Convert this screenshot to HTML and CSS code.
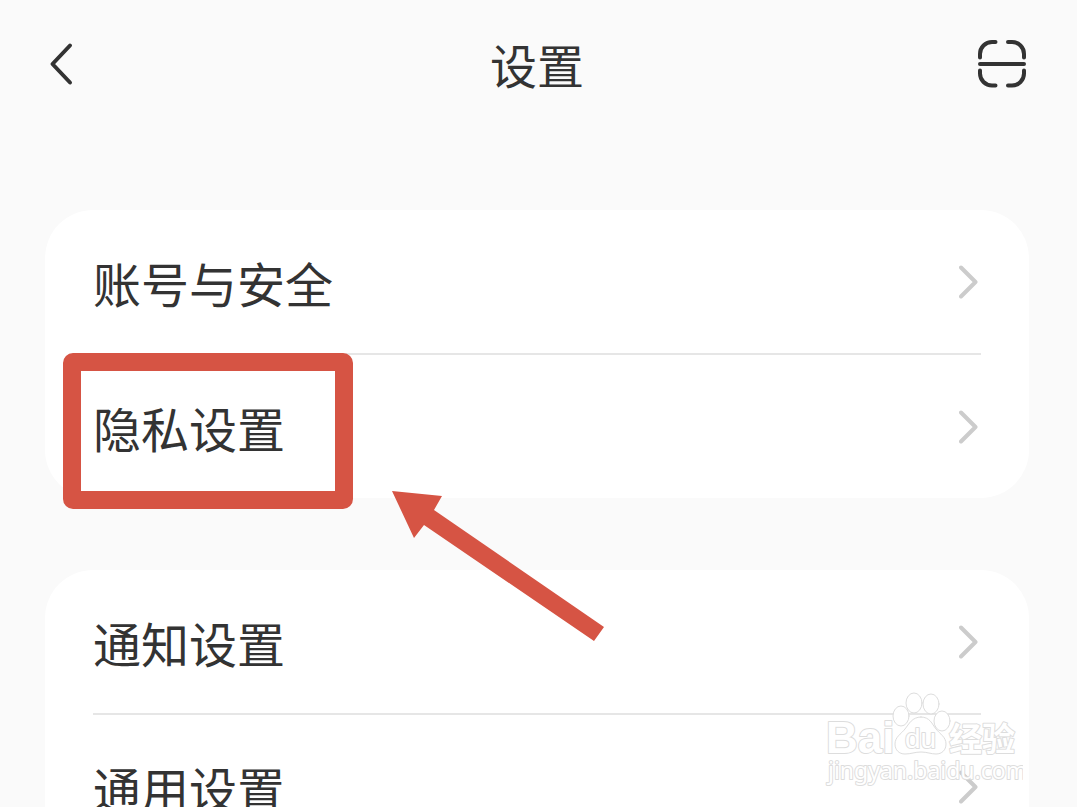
FILE: index.html
```
<!DOCTYPE html>
<html lang="zh-CN">
<head>
    <meta charset="UTF-8">
    <meta name="viewport" content="width=device-width, initial-scale=1.0">
    <title>设置</title>
    <link rel="stylesheet" href="styles.css">
</head>
<body>
    <header class="topbar">
        <button class="icon-button" type="button" aria-label="返回">
            <svg width="48" height="56" viewBox="0 0 48 56">
                <path d="M22 9.500 4.500 28 22 46.500"/>
            </svg>
        </button>
        <h1>设置</h1>
        <button class="icon-button" type="button" aria-label="扫一扫">
            <svg class="scan" width="48" height="56" viewBox="0 0 48 56">
                <path d="M2 21.500v-3.500a12 12 0 0 1 12-12h3.500M30 6h4a12 12 0 0 1 12 12v3.500M46 34.500v3a12 12 0 0 1-12 12h-4M17.500 49.500H14a12 12 0 0 1-12-12v-3M2 28h44"/>
            </svg>
        </button>
    </header>

    <main>
        <ul class="card">
            <li>
                <a class="row" href="#account">
                    <span>账号与安全</span>
                    <svg class="arrow" width="20" height="36" viewBox="0 0 20 36"><path d="M2 3.500 16.500 18 2 32.500"/></svg>
                </a>
            </li>
            <li class="marked">
                <a class="row" href="#privacy">
                    <span>隐私设置</span>
                    <svg class="arrow" width="20" height="36" viewBox="0 0 20 36"><path d="M2 3.500 16.500 18 2 32.500"/></svg>
                </a>
                <div class="mark-box"></div>
                <svg class="mark-arrow" width="212" height="152" viewBox="0 0 212 152">
                    <path d="M0 0 50 5 42 19 212 136 202 150 32 34 22 47Z"/>
                </svg>
            </li>
        </ul>

        <ul class="card">
            <li>
                <a class="row" href="#notice">
                    <span>通知设置</span>
                    <svg class="arrow" width="20" height="36" viewBox="0 0 20 36"><path d="M2 3.500 16.500 18 2 32.500"/></svg>
                </a>
            </li>
            <li>
                <a class="row" href="#general">
                    <span>通用设置</span>
                    <svg class="arrow" width="20" height="36" viewBox="0 0 20 36"><path d="M2 3.500 16.500 18 2 32.500"/></svg>
                </a>
            </li>
        </ul>
    </main>

    <svg class="watermark" width="200" height="100" viewBox="0 0 200 100">
        <text class="brand" x="3" y="64">Bai</text>
        <ellipse cx="78" cy="27" rx="8" ry="10"/>
        <ellipse cx="91" cy="14" rx="8" ry="10"/>
        <ellipse cx="108" cy="15" rx="8" ry="10"/>
        <ellipse cx="119" cy="32" rx="8" ry="10"/>
        <path d="M98 28c-9 0-12 7-16 12s-10 8-10 15c0 6 4 10 10 10 6 0 10-2 16-2s10 2 15 2c6 0 10-4 10-10 0-7-6-10-10-15s-6-12-15-12Z"/>
        <text class="du" x="82" y="59">du</text>
        <text class="cn" x="126" y="62">经验</text>
        <text class="site" x="5" y="90">jingyan.baidu.com</text>
    </svg>
</body>
</html>
```
FILE: styles.css
```
* {
    box-sizing: border-box;
}
body {
    position: relative;
    height: 100vh;
    margin: 0;
    overflow: hidden;
    background-color: #fafafa;
    color: #333;
    font-family: "Noto Sans CJK SC", sans-serif;
}
svg {
    display: block;
    fill: none;
    stroke-linecap: round;
    stroke-linejoin: round;
}

/* header */
.topbar {
    display: flex;
    align-items: center;
    justify-content: space-between;
    height: 128px;
    padding: 0 51px 0 48px;
}
.topbar h1 {
    margin: 0;
    font-size: 47px;
    font-weight: 400;
    line-height: 72px;
}
.icon-button {
    padding: 0;
    border: none;
    background: none;
    cursor: pointer;
}
.icon-button svg {
    stroke: #333;
    stroke-width: 4;
}

/* lists */
main {
    padding: 82px 48px 0 45px;
}
.card {
    margin: 0 0 72px;
    padding: 0 48px;
    list-style: none;
    background-color: white;
    border-radius: 48px;
}
.card li + li {
    border-top: 2px solid #e6e6e6;
}
.row {
    display: flex;
    align-items: center;
    justify-content: space-between;
    height: 143px;
    padding-right: 2px;
    color: inherit;
    font-size: 48px;
    line-height: 72px;
    text-decoration: none;
}
.arrow {
    stroke: #ccc;
    stroke-width: 4;
}

/* red marks over the list */
.marked {
    position: relative;
}
.mark-box {
    position: absolute;
    top: -2px;
    left: -30px;
    width: 290px;
    height: 156px;
    border: 18px solid #d65444;
    border-radius: 10px;
    pointer-events: none;
}
.mark-arrow {
    position: absolute;
    top: 136px;
    left: 299px;
    fill: #d65444;
    pointer-events: none;
}

/* watermark */
.watermark {
    position: absolute;
    right: 54px;
    bottom: 18px;
    fill: white;
    stroke: #ddd;
    stroke-width: 1;
    pointer-events: none;
}
.watermark text {
    paint-order: stroke;
    stroke-width: 2;
}
.brand {
    font: 700 44px "Liberation Sans", sans-serif;
}
.du {
    font: 400 28px "Liberation Sans", sans-serif;
}
.cn {
    font: 700 33px "Noto Sans CJK SC", sans-serif;
}
.site {
    font: 400 23px "Noto Sans", sans-serif;
}
```
